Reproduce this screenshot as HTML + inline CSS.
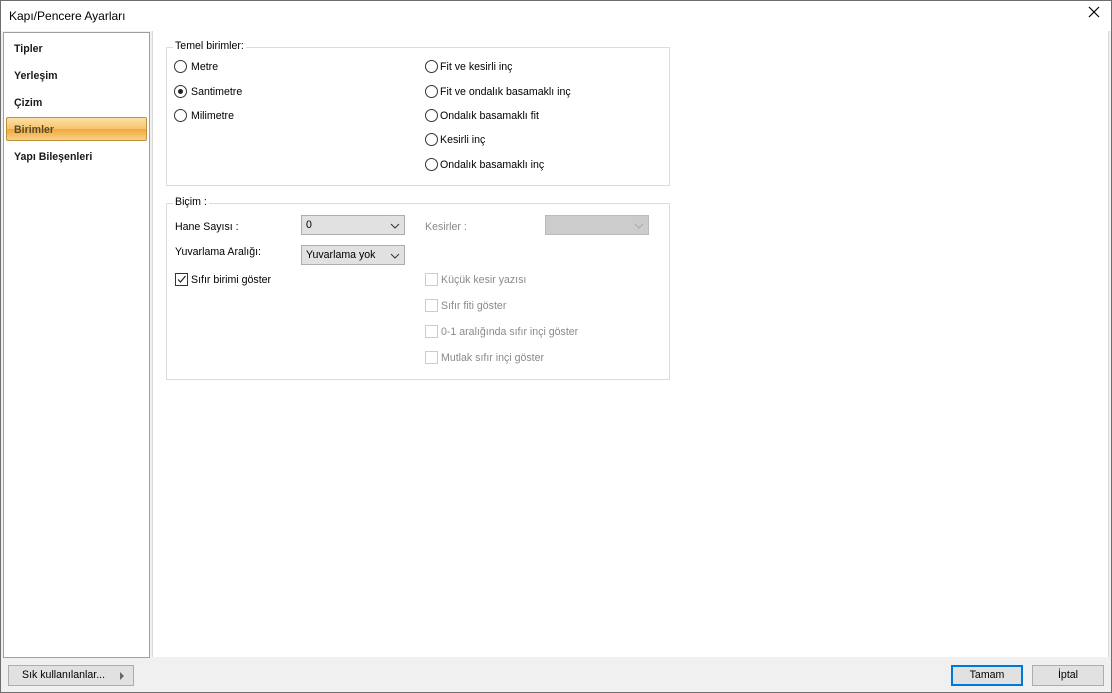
<html><head><style>
body{margin:0;width:1112px;height:693px;overflow:hidden;font-family:"Liberation Sans",sans-serif;font-size:10.6px;color:#000;}
.win{position:absolute;left:0;top:0;width:1112px;height:693px;background:#f0f0f0;}
.frame{position:absolute;left:0;top:0;width:1110px;height:691px;border:1px solid #6e6e6e;z-index:10;}
.title{position:absolute;left:0;top:0;width:1112px;height:31px;background:#fff;}
.title span{position:absolute;left:9px;top:9px;font-size:12px;}
.x{position:absolute;left:1088px;top:6px;font-size:16px;}
.left{position:absolute;left:3px;top:32px;width:145px;height:624px;background:#fff;border:1px solid #a0a0a0;}
.right{position:absolute;left:152px;top:31px;width:955px;height:626px;background:#fff;border-left:1px solid #d8d8d8;border-right:1px solid #d8d8d8;}
.item{position:absolute;left:10px;font-size:10.6px;font-weight:bold;color:#1a1a1a;}
.sel{position:absolute;left:2px;top:84px;width:139px;height:22px;border:1px solid #c0903a;border-radius:2px;background:linear-gradient(#fbe0a8,#f7c46a 50%,#f2a93a 51%,#f8d08a);}
.a{position:absolute;white-space:nowrap;}
.gb{position:absolute;border:1px solid #dcdcdc;}
.gt{position:absolute;background:#fff;padding:0 2px;}
.r{position:absolute;width:11px;height:11px;border:1px solid #333;border-radius:50%;background:#fff;}
.r.on::after{content:"";position:absolute;left:3px;top:3px;width:5px;height:5px;border-radius:50%;background:#222;}
.cb{position:absolute;width:11px;height:11px;border:1px solid #333;background:#fff;}
.cb.d{border-color:#ccc;}
.dis{color:#8a8a8a;}
.combo{position:absolute;height:20px;border:1px solid #adadad;background:#e1e1e1;box-sizing:border-box;}
.combo span{position:absolute;left:4px;top:3px;}
.combo svg{position:absolute;right:4px;top:7px;}
.btn{position:absolute;height:21px;border:1px solid #adadad;background:#e1e1e1;box-sizing:border-box;text-align:center;line-height:19px;}
</style></head><body><div class="win">
<div class="frame"></div>
<div class="title"><span>Kapı/Pencere Ayarları</span><div class="x"><svg width="12" height="12"><path d="M1 1L11 11M11 1L1 11" stroke="#000" stroke-width="1.2"/></svg></div></div>
<div class="left">
<div class="sel"></div>
<div class="item" style="top:10px">Tipler</div>
<div class="item" style="top:37px">Yerleşim</div>
<div class="item" style="top:64px">Çizim</div>
<div class="item" style="top:91px;color:#5a4a2a">Birimler</div>
<div class="item" style="top:118px">Yapı Bileşenleri</div>
</div>
<div class="right"></div>
<div class="gb" style="left:166px;top:47px;width:502px;height:137px"></div>
<div class="gt" style="left:173px;top:40px">Temel birimler:</div>
<div class="r" style="left:174px;top:60px"></div><div class="a" style="left:191px;top:61px">Metre</div>
<div class="r on" style="left:174px;top:85px"></div><div class="a" style="left:191px;top:86px">Santimetre</div>
<div class="r" style="left:174px;top:109px"></div><div class="a" style="left:191px;top:110px">Milimetre</div>
<div class="r" style="left:425px;top:60px"></div><div class="a" style="left:440px;top:61px">Fit ve kesirli inç</div>
<div class="r" style="left:425px;top:85px"></div><div class="a" style="left:440px;top:86px">Fit ve ondalık basamaklı inç</div>
<div class="r" style="left:425px;top:109px"></div><div class="a" style="left:440px;top:110px">Ondalık basamaklı fit</div>
<div class="r" style="left:425px;top:133px"></div><div class="a" style="left:440px;top:134px">Kesirli inç</div>
<div class="r" style="left:425px;top:158px"></div><div class="a" style="left:440px;top:159px">Ondalık basamaklı inç</div>
<div class="gb" style="left:166px;top:203px;width:502px;height:175px"></div>
<div class="gt" style="left:173px;top:196px">Biçim :</div>
<div class="a" style="left:175px;top:221px">Hane Sayısı :</div>
<div class="combo" style="left:301px;top:215px;width:104px"><span>0</span><svg width="10" height="6"><path d="M1 1L5 5L9 1" stroke="#333" fill="none"/></svg></div>
<div class="a dis" style="left:425px;top:221px">Kesirler :</div>
<div class="combo" style="left:545px;top:215px;width:104px;background:#ccc;border-color:#bbb"><svg width="10" height="6"><path d="M1 1L5 5L9 1" stroke="#aaa" fill="none"/></svg></div>
<div class="a" style="left:175px;top:246px">Yuvarlama Aralığı:</div>
<div class="combo" style="left:301px;top:245px;width:104px"><span>Yuvarlama yok</span><svg width="10" height="6"><path d="M1 1L5 5L9 1" stroke="#333" fill="none"/></svg></div>
<div class="cb" style="left:175px;top:273px"><svg width="11" height="11" style="position:absolute;left:0;top:0"><path d="M2 5.5L4.5 8L9.5 2" stroke="#222" stroke-width="1.2" fill="none"/></svg></div><div class="a" style="left:191px;top:274px">Sıfır birimi göster</div>
<div class="cb d" style="left:425px;top:273px"></div><div class="a dis" style="left:441px;top:274px">Küçük kesir yazısı</div>
<div class="cb d" style="left:425px;top:299px"></div><div class="a dis" style="left:441px;top:300px">Sıfır fiti göster</div>
<div class="cb d" style="left:425px;top:325px"></div><div class="a dis" style="left:441px;top:326px">0-1 aralığında sıfır inçi göster</div>
<div class="cb d" style="left:425px;top:351px"></div><div class="a dis" style="left:441px;top:352px">Mutlak sıfır inçi göster</div>
<div class="btn" style="left:8px;top:665px;width:126px;text-align:left;padding-left:13px">Sık kullanılanlar...<svg width="5" height="8" style="position:absolute;right:8px;top:6px"><path d="M0 0L4 4L0 8Z" fill="#666"/></svg></div>
<div class="btn" style="left:951px;top:665px;width:72px;border:2px solid #0078d7;line-height:17px">Tamam</div>
<div class="btn" style="left:1032px;top:665px;width:72px">İptal</div>
</div></body></html>
